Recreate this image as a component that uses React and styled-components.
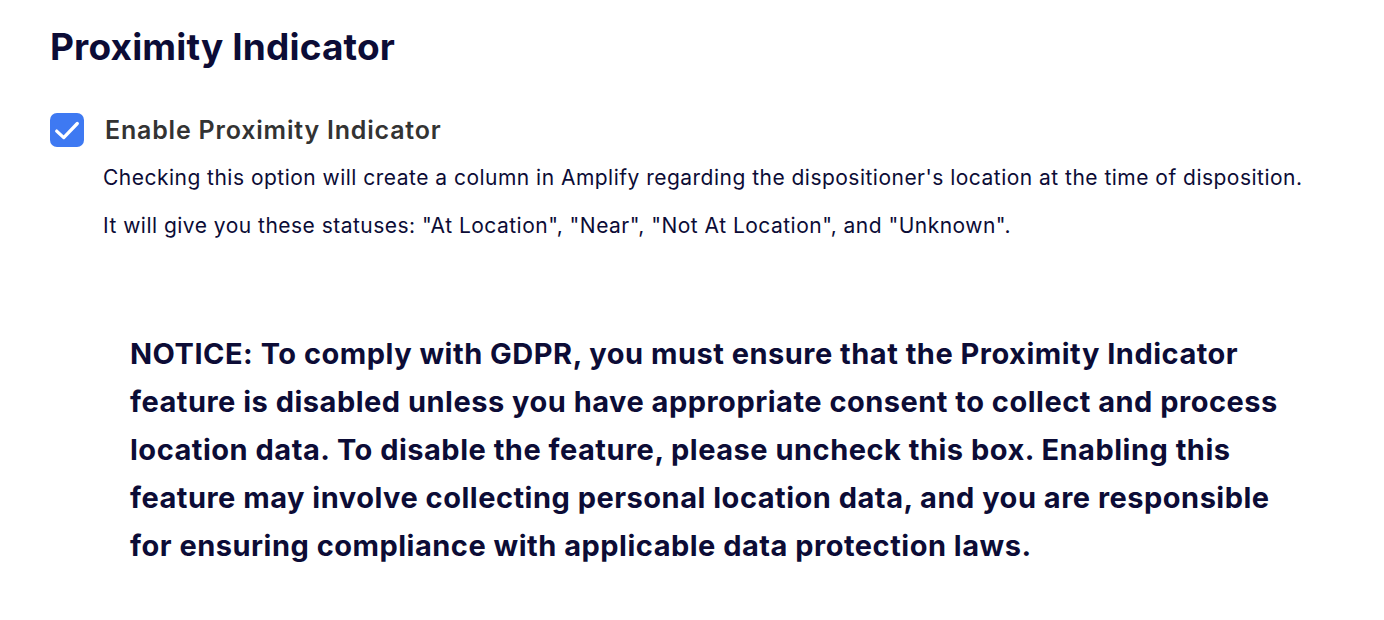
import styled, { createGlobalStyle } from "styled-components";
import { useState } from "react";

const GlobalStyle = createGlobalStyle`
  body {
    margin: 0;
    background: #ffffff;
    font-family: Inter, "Liberation Sans", Arial, sans-serif;
    color: #0c0c36;
  }
`;

const Page = styled.div`
  padding: 24px 50px 40px;
`;

const Title = styled.h1`
  margin: 0;
  font-size: 37px;
  line-height: 46px;
  font-weight: 700;
  letter-spacing: 0.15px;
  color: #0c0c36;
`;

const OptionRow = styled.label`
  display: flex;
  align-items: center;
  gap: 21px;
  margin-top: 43px;
  cursor: pointer;
`;

const Box = styled.span`
  width: 34px;
  height: 34px;
  border-radius: 7px;
  background: ${({ checked }) => (checked ? "#3e79f2" : "#ffffff")};
  border: ${({ checked }) => (checked ? "none" : "2px solid #9aa0b4")};
  display: flex;
  align-items: center;
  justify-content: center;
  flex-shrink: 0;
`;

const OptionLabel = styled.span`
  font-size: 25px;
  font-weight: 600;
  letter-spacing: 0.8px;
  color: #333333;
`;

const Description = styled.div`
  padding-left: 53px;
  margin-top: 7px;
`;

const DescLine = styled.p`
  margin: 0;
  font-size: 21px;
  line-height: 48px;
  letter-spacing: 0.48px;
  color: #0c0c36;
`;

const Notice = styled.p`
  margin: 80px 0 0 80px;
  width: 1170px;
  font-size: 29px;
  line-height: 48px;
  font-weight: 700;
  letter-spacing: 0.5px;
  color: #0c0c36;
`;

const Check = () => (
  <svg width="26" height="26" viewBox="0 0 24 24" fill="none">
    <path
      d="M2.5 13l6.5 6L21.5 6"
      stroke="#fff"
      strokeWidth="3"
      strokeLinecap="round"
      strokeLinejoin="round"
    />
  </svg>
);

export default function App() {
  const [enabled, setEnabled] = useState(true);

  return (
    <Page>
      <GlobalStyle />
      <Title>Proximity Indicator</Title>
      <OptionRow onClick={() => setEnabled(!enabled)}>
        <Box checked={enabled}>{enabled && <Check />}</Box>
        <OptionLabel>Enable Proximity Indicator</OptionLabel>
      </OptionRow>
      <Description>
        <DescLine>
          Checking this option will create a column in Amplify regarding the
          dispositioner's location at the time of disposition.
        </DescLine>
        <DescLine>
          It will give you these statuses: "At Location", "Near", "Not At
          Location", and "Unknown".
        </DescLine>
      </Description>
      <Notice>
        NOTICE: To comply with GDPR, you must ensure that the Proximity
        Indicator feature is disabled unless you have appropriate consent to
        collect and process location data. To disable the feature, please
        uncheck this box. Enabling this feature may involve collecting personal
        location data, and you are responsible for ensuring compliance with
        applicable data protection laws.
      </Notice>
    </Page>
  );
}
